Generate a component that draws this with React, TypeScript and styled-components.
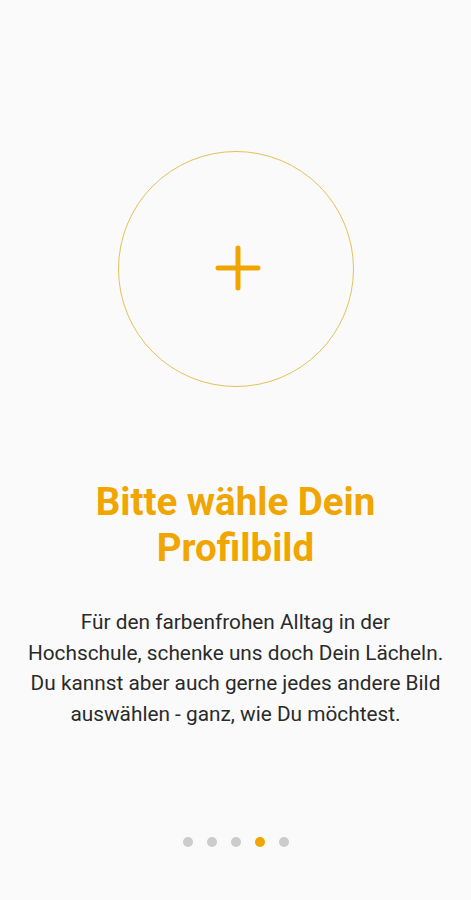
import React from "react";
import styled, { createGlobalStyle } from "styled-components";

const GlobalStyle = createGlobalStyle`
  html, body {
    margin: 0;
    padding: 0;
    background: #fafafa;
  }
  body {
    font-family: Roboto, "Liberation Sans", sans-serif;
  }
`;

const Screen = styled.div`
  width: 471px;
  height: 900px;
  display: flex;
  flex-direction: column;
  align-items: center;
  background: #fafafa;
  box-sizing: border-box;
  padding-top: 151px;
`;

const AvatarPicker = styled.button`
  width: 236px;
  height: 236px;
  border-radius: 50%;
  border: 1.5px solid #e2c258;
  background: transparent;
  display: flex;
  align-items: center;
  justify-content: center;
  padding: 0 0 2px 5px;
  cursor: pointer;
  box-sizing: border-box;
`;

const Title = styled.h1`
  margin: 92px 0 0;
  font-size: 38.5px;
  line-height: 46px;
  font-weight: 700;
  color: #f0a500;
  text-align: center;
`;

const Description = styled.p`
  margin: 36px 0 0;
  font-size: 20.8px;
  line-height: 30.5px;
  color: #2a2a2a;
  text-align: center;
  white-space: nowrap;
`;

const Dots = styled.div`
  margin-top: auto;
  margin-bottom: 53px;
  display: flex;
  gap: 14px;
`;

const Dot = styled.span<{ $active?: boolean }>`
  width: 10px;
  height: 10px;
  border-radius: 50%;
  background: ${(p) => (p.$active ? "#f0a500" : "#cccccc")};
`;

const PlusIcon = () => (
  <svg width="50" height="50" viewBox="0 0 50 50">
    <path
      d="M25 5v40M5 25h40"
      stroke="#f0a500"
      strokeWidth="5"
      strokeLinecap="round"
      fill="none"
    />
  </svg>
);

const App = () => {
  const pages = [0, 1, 2, 3, 4];
  const current = 3;

  return (
    <>
      <GlobalStyle />
      <Screen>
        <AvatarPicker aria-label="Profilbild hinzufügen">
          <PlusIcon />
        </AvatarPicker>
        <Title>
          Bitte wähle Dein
          <br />
          Profilbild
        </Title>
        <Description>
          Für den farbenfrohen Alltag in der
          <br />
          Hochschule, schenke uns doch Dein Lächeln.
          <br />
          Du kannst aber auch gerne jedes andere Bild
          <br />
          auswählen - ganz, wie Du möchtest.
        </Description>
        <Dots>
          {pages.map((p) => (
            <Dot key={p} $active={p === current} />
          ))}
        </Dots>
      </Screen>
    </>
  );
};

export default App;
